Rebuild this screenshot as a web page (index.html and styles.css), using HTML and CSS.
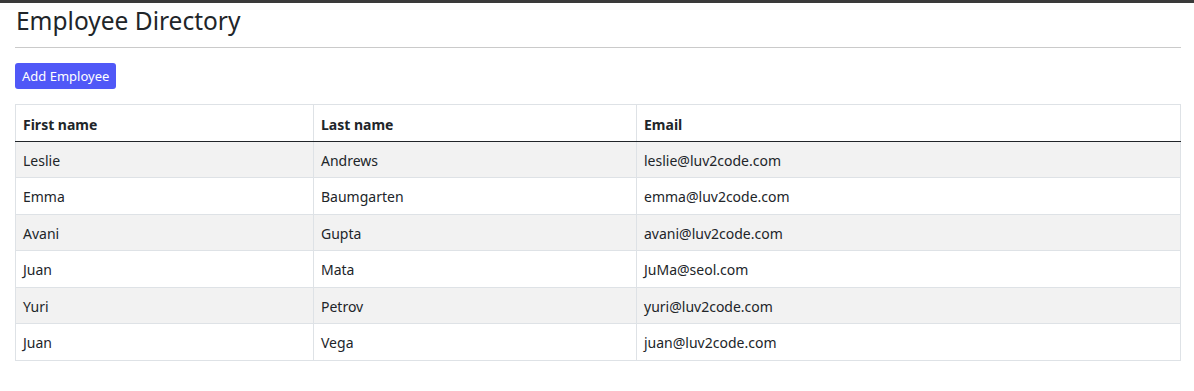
FILE: index.html
```html
<!DOCTYPE html>
<html lang="en">

<head>
    <meta charset="UTF-8">
    <meta name="viewport" content="width=device-width, initial-scale=1.0">
    <title>Employee Directory</title>
    <link rel="stylesheet" href="styles.css">
</head>

<body>
    <div class="container">
        <h3 class="page-title">Employee Directory</h3>
        <hr>

        <!-- Add button -->
        <button class="btn-primary">Add Employee</button>

        <table class="table">
            <thead>
                <tr>
                    <th class="col-first">First name</th>
                    <th class="col-last">Last name</th>
                    <th>Email</th>
                </tr>
            </thead>
            <tbody>
                <tr>
                    <td>Leslie</td>
                    <td>Andrews</td>
                    <td>leslie@luv2code.com</td>
                </tr>
                <tr>
                    <td>Emma</td>
                    <td>Baumgarten</td>
                    <td>emma@luv2code.com</td>
                </tr>
                <tr>
                    <td>Avani</td>
                    <td>Gupta</td>
                    <td>avani@luv2code.com</td>
                </tr>
                <tr>
                    <td>Juan</td>
                    <td>Mata</td>
                    <td>JuMa@seol.com</td>
                </tr>
                <tr>
                    <td>Yuri</td>
                    <td>Petrov</td>
                    <td>yuri@luv2code.com</td>
                </tr>
                <tr>
                    <td>Juan</td>
                    <td>Vega</td>
                    <td>juan@luv2code.com</td>
                </tr>
            </tbody>
        </table>
    </div>
</body>

</html>
```

FILE: styles.css
```css
/* Theme colours */
:root {
    --text-color: #212529;
    --border-color: #dee2e6;
    --stripe-bg: #f2f2f2;
    --primary: #5058f7;
}

body {
    font-family: "Noto Sans", Arial, sans-serif;
    font-size: 14px;
    color: var(--text-color);
    background: #fff;
    margin: 0;
    border-top: 3px solid #3a3a3a;
}

.container {
    padding: 0 13px 0 15px;
}

.page-title {
    font-size: 24.5px;
    font-weight: 400;
    line-height: 31px;
    margin: 2px 0 0 1px;
}

hr {
    border: none;
    border-top: 1px solid #cacaca;
    margin: 11px 0 15px;
}

.btn-primary {
    font-family: inherit;
    font-size: 13px;
    height: 26px;
    padding: 0 7px;
    background-color: var(--primary);
    color: #fff;
    border: none;
    border-radius: 3px;
    cursor: pointer;
}

.table {
    width: 100%;
    margin-top: 15px;
    border-collapse: collapse;
    border: 1px solid var(--border-color);
}

.table th,
.table td {
    text-align: left;
    padding: 9px 8px 7px 7px;
    line-height: 19.5px;
    border: 1px solid var(--border-color);
}

.table th {
    font-weight: 700;
    padding-top: 10px;
    padding-bottom: 6px;
    border-bottom: 1px solid var(--text-color);
}

.col-first {
    width: 282px;
}

.col-last {
    width: 307px;
}

.table tbody tr:nth-child(odd) {
    background: var(--stripe-bg);
}
```
